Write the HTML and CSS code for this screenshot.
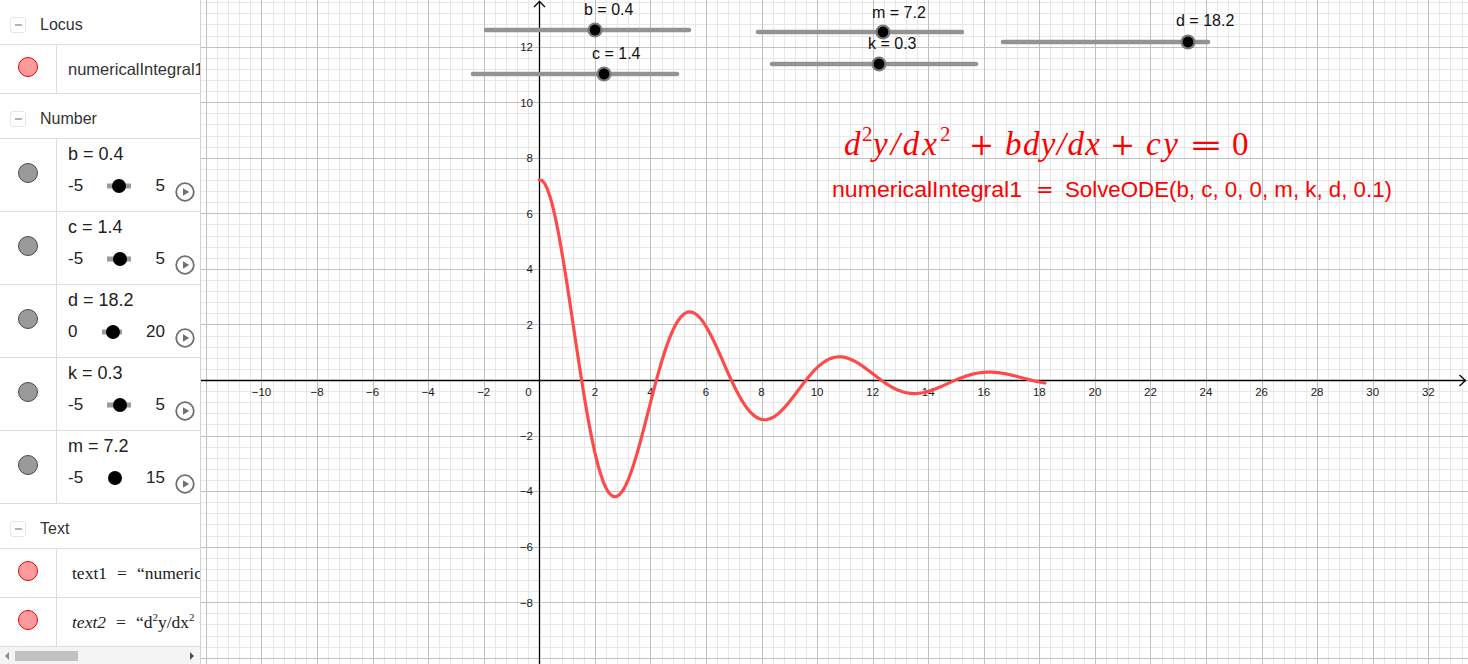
FILE: index.html
```html
<!DOCTYPE html>
<html lang="en">
<head>
<meta charset="utf-8">
<title>SolveODE</title>
<link rel="stylesheet" href="styles.css">
</head>
<body>
<div class="app">
  <aside class="algebra">
    <div class="list">
      <div class="group-head"><span class="toggle"></span><span>Locus</span></div>
      <div class="item item-obj">
        <div class="marker"><span class="dot dot-red"></span></div>
        <div class="content obj-text">numericalIntegral1</div>
      </div>

      <div class="group-head"><span class="toggle"></span><span>Number</span></div>

      <div class="item item-num">
        <div class="marker"><span class="dot dot-gray"></span></div>
        <div class="content num">
          <div class="num-label">b = 0.4</div>
          <div class="range-row">
            <div class="range"><span>-5</span><svg class="mini" width="28" height="16" viewBox="0 0 28 16"><line x1="2" y1="8" x2="26" y2="8"/><circle cx="14" cy="8" r="7"/></svg><span>5</span></div>
            <svg class="play" width="20" height="20" viewBox="0 0 20 20"><circle cx="10" cy="10" r="8.8"/><path d="M8 6.2 L14.2 10 L8 13.8 Z"/></svg>
          </div>
        </div>
      </div>

      <div class="item item-num">
        <div class="marker"><span class="dot dot-gray"></span></div>
        <div class="content num">
          <div class="num-label">c = 1.4</div>
          <div class="range-row">
            <div class="range"><span>-5</span><svg class="mini" width="28" height="16" viewBox="0 0 28 16"><line x1="2" y1="8" x2="26" y2="8"/><circle cx="15" cy="8" r="7"/></svg><span>5</span></div>
            <svg class="play" width="20" height="20" viewBox="0 0 20 20"><circle cx="10" cy="10" r="8.8"/><path d="M8 6.2 L14.2 10 L8 13.8 Z"/></svg>
          </div>
        </div>
      </div>

      <div class="item item-num">
        <div class="marker"><span class="dot dot-gray"></span></div>
        <div class="content num">
          <div class="num-label">d = 18.2</div>
          <div class="range-row">
            <div class="range"><span>0</span><svg class="mini" width="28" height="16" viewBox="0 0 28 16"><line x1="4" y1="8" x2="24" y2="8"/><circle cx="15" cy="8" r="7"/></svg><span>20</span></div>
            <svg class="play" width="20" height="20" viewBox="0 0 20 20"><circle cx="10" cy="10" r="8.8"/><path d="M8 6.2 L14.2 10 L8 13.8 Z"/></svg>
          </div>
        </div>
      </div>

      <div class="item item-num">
        <div class="marker"><span class="dot dot-gray"></span></div>
        <div class="content num">
          <div class="num-label">k = 0.3</div>
          <div class="range-row">
            <div class="range"><span>-5</span><svg class="mini" width="28" height="16" viewBox="0 0 28 16"><line x1="2" y1="8" x2="26" y2="8"/><circle cx="15" cy="8" r="7"/></svg><span>5</span></div>
            <svg class="play" width="20" height="20" viewBox="0 0 20 20"><circle cx="10" cy="10" r="8.8"/><path d="M8 6.2 L14.2 10 L8 13.8 Z"/></svg>
          </div>
        </div>
      </div>

      <div class="item item-num">
        <div class="marker"><span class="dot dot-gray"></span></div>
        <div class="content num">
          <div class="num-label">m = 7.2</div>
          <div class="range-row">
            <div class="range"><span>-5</span><svg class="mini" width="28" height="16" viewBox="0 0 28 16"><circle cx="14" cy="8" r="7"/></svg><span>15</span></div>
            <svg class="play" width="20" height="20" viewBox="0 0 20 20"><circle cx="10" cy="10" r="8.8"/><path d="M8 6.2 L14.2 10 L8 13.8 Z"/></svg>
          </div>
        </div>
      </div>

      <div class="group-head"><span class="toggle"></span><span>Text</span></div>

      <div class="item item-obj">
        <div class="marker"><span class="dot dot-red"></span></div>
        <div class="content tex-text"><span>text1</span><span class="eq">=</span><span>“numericalIntegral1 = SolveODE(b, c, 0, 0, m, k, d, 0.1)”</span></div>
      </div>
      <div class="item item-obj">
        <div class="marker"><span class="dot dot-red"></span></div>
        <div class="content tex-text"><span class="it">text2</span><span class="eq">=</span><span>“d<sup>2</sup>y/dx<sup>2</sup> + bdy/dx + cy = 0”</span></div>
      </div>
    </div>
    <div class="hscroll">
      <span class="arr arr-l"></span>
      <div class="track"><div class="thumb"></div></div>
      <span class="arr arr-r"></span>
    </div>
  </aside>

  <main class="graphics">
    <svg class="canvas" width="1267" height="664" viewBox="201 0 1267 664">
      <g id="grid-minor" class="grid-minor"></g>
      <g id="grid-major" class="grid-major"></g>

      <g class="axes">
        <line x1="201" y1="380.5" x2="1466" y2="380.5"/>
        <polyline points="1459.5,375 1465.5,380.5 1459.5,386"/>
        <line x1="539.5" y1="664" x2="539.5" y2="1.5"/>
        <polyline points="534,7 539.5,1.5 545,7"/>
      </g>

      <g class="xlabels">
        <text x="261.5" y="396">−10</text>
        <text x="317.1" y="396">−8</text>
        <text x="372.6" y="396">−6</text>
        <text x="428.2" y="396">−4</text>
        <text x="483.7" y="396">−2</text>
        <text x="528.5" y="396">0</text>
        <text x="594.9" y="396">2</text>
        <text x="650.4" y="396">4</text>
        <text x="706" y="396">6</text>
        <text x="761.5" y="396">8</text>
        <text x="817.1" y="396">10</text>
        <text x="872.7" y="396">12</text>
        <text x="928.2" y="396">14</text>
        <text x="983.8" y="396">16</text>
        <text x="1039.3" y="396">18</text>
        <text x="1094.9" y="396">20</text>
        <text x="1150.5" y="396">22</text>
        <text x="1206" y="396">24</text>
        <text x="1261.6" y="396">26</text>
        <text x="1317.1" y="396">28</text>
        <text x="1372.7" y="396">30</text>
        <text x="1428.3" y="396">32</text>
      </g>

      <g class="ylabels">
        <text x="533" y="50.9">12</text>
        <text x="533" y="106.5">10</text>
        <text x="533" y="162.1">8</text>
        <text x="533" y="217.6">6</text>
        <text x="533" y="273.2">4</text>
        <text x="533" y="328.7">2</text>
        <text x="533" y="439.9">−2</text>
        <text x="533" y="495.4">−4</text>
        <text x="533" y="551">−6</text>
        <text x="533" y="606.5">−8</text>
      </g>

      <path id="curve" class="curve" d="M539.3 180"/>

      <g class="sliders">
        <line class="track" x1="486" y1="30" x2="689" y2="30"/>
        <circle class="halo" cx="595" cy="30" r="7.6"/>
        <circle class="knob" cx="595" cy="30" r="5.4"/>
        <text class="slabel" x="584" y="15">b = 0.4</text>

        <line class="track" x1="473" y1="74" x2="677" y2="74"/>
        <circle class="halo" cx="604" cy="74" r="7.6"/>
        <circle class="knob" cx="604" cy="74" r="5.4"/>
        <text class="slabel" x="592" y="59">c = 1.4</text>

        <line class="track" x1="758" y1="32" x2="962" y2="32"/>
        <circle class="halo" cx="883" cy="32" r="7.6"/>
        <circle class="knob" cx="883" cy="32" r="5.4"/>
        <text class="slabel" x="872" y="18">m = 7.2</text>

        <line class="track" x1="772" y1="64" x2="976" y2="64"/>
        <circle class="halo" cx="879" cy="64" r="7.6"/>
        <circle class="knob" cx="879" cy="64" r="5.4"/>
        <text class="slabel" x="868" y="49">k = 0.3</text>

        <line class="track" x1="1003" y1="42" x2="1208" y2="42"/>
        <circle class="halo" cx="1188" cy="42" r="7.6"/>
        <circle class="knob" cx="1188" cy="42" r="5.4"/>
        <text class="slabel" x="1176" y="26">d = 18.2</text>
      </g>

      <g class="formula">
        <text class="f-it" x="844" y="155">d</text>
        <text class="f-sup" x="862" y="141">2</text>
        <text class="f-it" x="873" y="155" textLength="64" lengthAdjust="spacing">y/dx</text>
        <text class="f-sup" x="940" y="141">2</text>
        <text class="f-op" x="969" y="155">+</text>
        <text class="f-it" x="1005" y="155" textLength="95" lengthAdjust="spacing">bdy/dx</text>
        <text class="f-op" x="1110" y="155">+</text>
        <text class="f-it" x="1146" y="155" textLength="32" lengthAdjust="spacing">cy</text>
        <text class="f-op" x="1189" y="155" textLength="34" lengthAdjust="spacingAndGlyphs">=</text>
        <text class="f-rm" x="1232" y="155">0</text>

        <text class="f-sans" x="832" y="197" textLength="190" lengthAdjust="spacingAndGlyphs">numericalIntegral1</text>
        <text class="f-eq" x="1036" y="197">=</text>
        <text class="f-sans" x="1065" y="197" textLength="327" lengthAdjust="spacingAndGlyphs">SolveODE(b, c, 0, 0, m, k, d, 0.1)</text>
      </g>
    </svg>
  </main>
</div>
<script src="script.js"></script>
</body>
</html>
```

FILE: styles.css
```css
* {
  box-sizing: border-box;
}

html,
body {
  margin: 0;
  padding: 0;
}

body {
  width: 1468px;
  height: 664px;
  overflow: hidden;
  background: #ffffff;
  font-family: "Liberation Sans", Arial, sans-serif;
  color: #333333;
}

.app {
  display: flex;
  height: 664px;
}

/* ---------- Algebra view ---------- */

.algebra {
  width: 201px;
  flex: none;
  display: flex;
  flex-direction: column;
  border-right: 1px solid #d2d2d2;
  background: #ffffff;
}

.list {
  flex: 1;
  overflow: hidden;
}

.group-head {
  height: 45px;
  display: flex;
  align-items: center;
  padding: 5px 0 0 10px;
  border-bottom: 1px solid #dddddd;
  font-size: 16px;
  color: #333333;
}

.toggle {
  width: 16px;
  height: 16px;
  margin-right: 14px;
  border: 1px solid #e4e4e4;
  border-radius: 3px;
  display: flex;
  align-items: center;
  justify-content: center;
}

.toggle::after {
  content: "";
  width: 7px;
  height: 2px;
  background: #b4b4b4;
}

.item {
  display: flex;
  border-bottom: 1px solid #dddddd;
}

.item-obj {
  height: 49px;
}

.item-num {
  height: 73px;
}

.marker {
  width: 57px;
  flex: none;
  display: flex;
  align-items: center;
  justify-content: center;
  border-right: 1px solid #dddddd;
}

.dot {
  width: 20px;
  height: 20px;
  border-radius: 50%;
  margin-bottom: 4px;
}

.dot-red {
  background: #ff9b9b;
  border: 1px solid #e5000c;
}

.dot-gray {
  background: #9a9a9a;
  border: 1px solid #4a4a4a;
}

.content {
  flex: 1;
  min-width: 0;
  overflow: hidden;
  white-space: nowrap;
  padding-left: 11px;
}

.obj-text {
  display: flex;
  align-items: center;
  font-size: 16.5px;
  color: #333333;
}

.num {
  padding-top: 4px;
  color: #222222;
}

.num-label {
  font-size: 18px;
  line-height: 22px;
}

.range-row {
  display: flex;
  align-items: flex-start;
  margin-top: 11px;
}

.range {
  width: 97px;
  display: flex;
  align-items: center;
  justify-content: space-between;
  font-size: 17px;
  line-height: 20px;
}

.mini {
  display: block;
}

.mini line {
  stroke: #9a9a9a;
  stroke-width: 5;
}

.mini circle {
  fill: #000000;
}

.play {
  display: block;
  margin: 6px 0 0 10px;
  flex: none;
}

.play circle {
  fill: none;
  stroke: #707070;
  stroke-width: 1.8;
}

.play path {
  fill: #707070;
}

.tex-text {
  display: flex;
  align-items: center;
  padding-left: 15px;
  font-family: "Liberation Serif", "Times New Roman", serif;
  font-size: 17.5px;
  color: #222222;
}

.tex-text .it {
  font-style: italic;
}

.tex-text .eq {
  margin: 0 10px;
}

.tex-text sup {
  font-size: 11px;
  line-height: 0;
}

.hscroll {
  height: 17px;
  flex: none;
  display: flex;
  align-items: center;
  background: #f4f4f4;
}

.arr {
  width: 0;
  height: 0;
  border-top: 4px solid transparent;
  border-bottom: 4px solid transparent;
}

.arr-l {
  margin: 0 6px 0 5px;
  border-right: 4px solid #8a8a8a;
}

.hscroll .track {
  flex: 1;
  height: 10px;
}

.thumb {
  width: 63px;
  height: 10px;
  background: #c1c1c1;
}

.arr-r {
  margin: 0 6px 0 5px;
  border-left: 4px solid #505050;
}

/* ---------- Graphics view ---------- */

.graphics {
  flex: 1;
  min-width: 0;
  overflow: hidden;
  background: #ffffff;
}

.canvas {
  display: block;
}

.grid-minor line {
  stroke: #e8e8e8;
  stroke-width: 1;
}

.grid-major line {
  stroke: #c0c0c0;
  stroke-width: 1;
}

.axes line,
.axes polyline {
  stroke: #000000;
  stroke-width: 1.3;
  fill: none;
}

.xlabels text,
.ylabels text {
  font-family: "Liberation Sans", Arial, sans-serif;
  font-size: 11.5px;
  fill: #1a1a1a;
}

.xlabels text {
  text-anchor: middle;
}

.ylabels text {
  text-anchor: end;
}

.curve {
  fill: none;
  stroke: #ff4a4a;
  stroke-width: 3.2;
  stroke-linejoin: round;
  stroke-linecap: round;
}

.sliders .track {
  stroke: #939393;
  stroke-width: 4.5;
  stroke-linecap: round;
}

.sliders .halo {
  fill: #7b7b7b;
}

.sliders .knob {
  fill: #000000;
}

.slabel {
  font-family: "Liberation Sans", Arial, sans-serif;
  font-size: 16px;
  fill: #111111;
}

.formula text {
  fill: #ff0000;
}

.f-it {
  font-family: "Liberation Serif", "Times New Roman", serif;
  font-style: italic;
  font-size: 33px;
}

.f-sup {
  font-family: "Liberation Serif", "Times New Roman", serif;
  font-size: 21px;
}

.f-op {
  font-family: "DejaVu Serif", "Liberation Serif", serif;
  font-size: 30px;
}

.f-rm {
  font-family: "Liberation Serif", "Times New Roman", serif;
  font-size: 33px;
}

.f-sans {
  font-family: "Liberation Sans", Arial, sans-serif;
  font-size: 22px;
}

.f-eq {
  font-family: "DejaVu Sans", sans-serif;
  font-size: 21px;
}
```

FILE: script.js
```js
(function () {
  var NS = "http://www.w3.org/2000/svg";
  var ox = 539.3, oy = 380, u = 27.78, s = u * 2 / 5;
  var minor = document.getElementById("grid-minor");
  var major = document.getElementById("grid-major");

  function line(g, x1, y1, x2, y2) {
    var l = document.createElementNS(NS, "line");
    l.setAttribute("x1", x1);
    l.setAttribute("y1", y1);
    l.setAttribute("x2", x2);
    l.setAttribute("y2", y2);
    g.appendChild(l);
  }

  var i, x, y;
  for (i = -30; i <= 83; i++) {
    x = Math.round(ox + i * s) + 0.5;
    line(i % 5 === 0 ? major : minor, x, 0, x, 664);
  }
  for (i = -34; i <= 25; i++) {
    y = Math.round(oy + i * s) + 0.5;
    line(i % 5 === 0 ? major : minor, 201, y, 1468, y);
  }

  // SolveODE(b, c, 0, 0, m, k, d, 0.1): y'' + b y' + c y = 0, y(0)=m, y'(0)=k
  var b = 0.4, c = 1.4, m = 7.2, k = 0.3, d = 18.2, h = 0.1;
  function acc(yy, vv) { return -b * vv - c * yy; }
  var xx = 0, yy = m, vv = k;
  var pts = [];
  function push() {
    pts.push((ox + xx * u).toFixed(2) + " " + (oy - yy * u).toFixed(2));
  }
  push();
  var n = Math.round(d / h);
  for (var t = 0; t < n; t++) {
    var k1y = vv, k1v = acc(yy, vv);
    var k2y = vv + h / 2 * k1v, k2v = acc(yy + h / 2 * k1y, vv + h / 2 * k1v);
    var k3y = vv + h / 2 * k2v, k3v = acc(yy + h / 2 * k2y, vv + h / 2 * k2v);
    var k4y = vv + h * k3v, k4v = acc(yy + h * k3y, vv + h * k3v);
    yy += h / 6 * (k1y + 2 * k2y + 2 * k3y + k4y);
    vv += h / 6 * (k1v + 2 * k2v + 2 * k3v + k4v);
    xx = (t + 1) * h;
    push();
  }
  document.getElementById("curve").setAttribute("d", "M" + pts.join(" L"));
})();
```
